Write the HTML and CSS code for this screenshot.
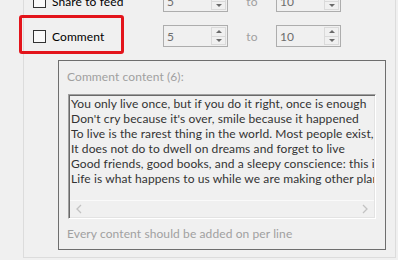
FILE: index.html
```html
<!DOCTYPE html>
<html lang='en'>
<head>
  <meta charset='UTF-8'>
  <meta name='viewport' content='width=device-width, initial-scale=1.0'>
  <title>Comment settings</title>
  <link rel="stylesheet" href="styles.css">
</head>
<body>

<div class='options-panel'>
  <div class='option-row'>
    <label class='check-cell'>
      <span class='check-box'></span>
      <span class='check-label'>Share to feed</span>
    </label>
    <div class='spin-box'>
      <span class='spin-value'>5</span>
      <span class='spin-buttons'>
        <span class='spin-btn'><span class='arrow-up'></span></span>
        <span class='spin-btn'><span class='arrow-down'></span></span>
      </span>
    </div>
    <span class='range-to'>to</span>
    <div class='spin-box'>
      <span class='spin-value'>10</span>
      <span class='spin-buttons'>
        <span class='spin-btn'><span class='arrow-up'></span></span>
        <span class='spin-btn'><span class='arrow-down'></span></span>
      </span>
    </div>
  </div>

  <div class='option-row'>
    <label class='check-cell'>
      <span class='check-box'></span>
      <span class='check-label'>Comment</span>
      <span class='highlight'></span>
    </label>
    <div class='spin-box'>
      <span class='spin-value'>5</span>
      <span class='spin-buttons'>
        <span class='spin-btn'><span class='arrow-up'></span></span>
        <span class='spin-btn'><span class='arrow-down'></span></span>
      </span>
    </div>
    <span class='range-to'>to</span>
    <div class='spin-box'>
      <span class='spin-value'>10</span>
      <span class='spin-buttons'>
        <span class='spin-btn'><span class='arrow-up'></span></span>
        <span class='spin-btn'><span class='arrow-down'></span></span>
      </span>
    </div>
  </div>

  <div class='content-group'>
    <div class='group-title'>Comment content (6):</div>
    <div class='text-box'>
      <div class='text-lines'>You only live once, but if you do it right, once is enough
Don't cry because it's over, smile because it happened
To live is the rarest thing in the world. Most people exist, that is all.
It does not do to dwell on dreams and forget to live
Good friends, good books, and a sleepy conscience: this is the ideal life.
Life is what happens to us while we are making other plans.</div>
      <div class='h-scroll'>
        <svg width='8' height='10' viewBox='0 0 8 10'><path d='M6 1 L2 5 L6 9' fill='none' stroke='#c2c2c2' stroke-width='1.3'/></svg>
        <svg width='8' height='10' viewBox='0 0 8 10'><path d='M2 1 L6 5 L2 9' fill='none' stroke='#c2c2c2' stroke-width='1.3'/></svg>
      </div>
    </div>
    <div class='group-hint'>Every content should be added on per line</div>
  </div>
</div>

</body>
</html>
```

FILE: styles.css
```css
* {
  margin: 0;
  padding: 0;
  box-sizing: border-box;
}

body {
  font-family: Lato, 'Noto Sans', sans-serif;
  font-size: 12px;
  line-height: 15px;
  letter-spacing: 0.1px;
  background-color: #F0F0F0;
  color: #1a1a1a;
  width: 398px;
  height: 260px;
  overflow: hidden;
}

/* outer settings panel, top part scrolled away */
.options-panel {
  margin: -20px 0 0 23px;
  width: 373px;
  height: 278px;
  border: 1px solid #DCDCDC;
  padding-top: 9px;
}

.option-row {
  display: flex;
  align-items: center;
  height: 22px;
  padding-left: 9px;
  margin-bottom: 13px;
}

.check-cell {
  position: relative;
  display: flex;
  align-items: center;
  width: 130px;
  height: 22px;
}

.check-box {
  width: 13px;
  height: 13px;
  border: 1px solid #333;
  background-color: #FAFAFA;
  margin-right: 6px;
}

.check-label {
  color: #000;
}

/* red annotation frame */
.highlight {
  position: absolute;
  left: -14px;
  top: -10px;
  width: 105px;
  height: 39px;
  border: 3px solid #E3141B;
  border-radius: 3px;
}

.spin-box {
  display: flex;
  justify-content: space-between;
  width: 65px;
  height: 22px;
  border: 1px solid #ADADAD;
  padding: 1px;
}

.spin-value {
  color: #6D6D6D;
  padding: 2px 0 0 2px;
}

.spin-buttons {
  display: flex;
  flex-direction: column;
  width: 15px;
}

.spin-btn {
  flex: 1;
  display: flex;
  align-items: center;
  justify-content: center;
  border: 1px solid #DADADA;
}

.spin-btn + .spin-btn {
  border-top: none;
}

.arrow-up,
.arrow-down {
  width: 0;
  height: 0;
  border-left: 3px solid transparent;
  border-right: 3px solid transparent;
}

.arrow-up {
  border-bottom: 3px solid #6A6A6A;
}

.arrow-down {
  border-top: 3px solid #6A6A6A;
}

.range-to {
  width: 48px;
  text-align: center;
  color: #A0A0A0;
}

.content-group {
  margin-left: 34px;
  width: 328px;
  height: 190px;
  border: 1px solid #6E6E6E;
  padding: 8px 0 0 8px;
}

.group-title,
.group-hint {
  color: #A0A0A0;
}

.text-box {
  display: flex;
  flex-direction: column;
  margin: 10px 0 0 1px;
  width: 308px;
  height: 125px;
  border-top: 1px solid #A0A0A0;
  border-left: 1px solid #A0A0A0;
  border-right: 1px solid #FFFFFF;
  border-bottom: 1px solid #FFFFFF;
  box-shadow: inset 1px 1px 0 #696969, inset -1px -1px 0 #E3E3E3;
}

.text-lines {
  flex: 1;
  overflow: hidden;
  white-space: pre;
  color: #333;
  padding: 1px 0 0 2px;
  margin-right: 1px;
}

.h-scroll {
  display: flex;
  justify-content: space-between;
  align-items: center;
  height: 17px;
  margin: 0 1px 1px 1px;
  padding: 0 5px;
  border-top: 1px solid #FAFAFA;
}

.group-hint {
  margin-top: 7px;
}
```
